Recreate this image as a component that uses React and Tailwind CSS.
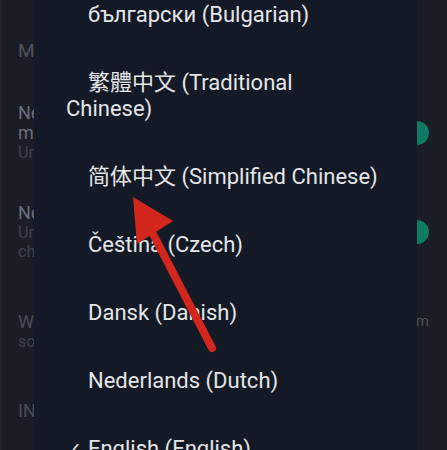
import React from "react";

const languages = [
  { label: "български (Bulgarian)" },
  { label: "繁體中文 (Traditional", wrap: "Chinese)", cjk: "tc" },
  { label: "简体中文 (Simplified Chinese)" },
  { label: "Čeština (Czech)" },
  { label: "Dansk (Danish)" },
  { label: "Nederlands (Dutch)" },
  { label: "English (English)", checked: true },
];

function Toggle() {
  return <div className="w-6 h-6 rounded-full bg-[#0e7a63] shrink-0" />;
}

function SettingsBehind() {
  return (
    <div className="flex flex-col pl-[18px] pr-[18px] text-[#50545d]">
      <div className="mt-[41px] text-[19px] leading-5">Messages</div>

      {/* New messages row */}
      <div className="mt-[42px] flex items-center justify-between">
        <div>
          <div className="text-[18px] leading-5 text-[#6c7079]">
            New message
            <br />
            messages
          </div>
          <div className="text-[16px] leading-[19px] text-[#3f434c]">Unread count only</div>
        </div>
        <Toggle />
      </div>

      {/* Chat requests row */}
      <div className="mt-[41px] flex items-center justify-between">
        <div>
          <div className="text-[18px] leading-5 text-[#6c7079]">New chat requests</div>
          <div className="text-[16px] leading-[19px] text-[#3f434c]">
            Unknown senders
            <br />
            chat invitations
          </div>
        </div>
        <Toggle />
      </div>

      {/* Wallpaper row */}
      <div className="mt-[51px] flex items-start justify-between">
        <div>
          <div className="text-[18px] leading-5 text-[#4a4e57]">Wallpaper</div>
          <div className="text-[16px] leading-[19px] text-[#3f434c]">solid color</div>
        </div>
        <div className="text-[15px] leading-5 text-[#4a4e57] mt-[-1px]">Custom</div>
      </div>

      <div className="mt-[50px] text-[18px] leading-5 text-[#4a4e57]">INTERFACE</div>
    </div>
  );
}

function LanguageMenu() {
  return (
    <div className="absolute left-[34px] top-0 w-[383px] h-full bg-[#141a25] overflow-hidden">
      <div className="mt-[-19px] flex flex-col">
        {languages.map((lang) => (
          <div
            key={lang.label}
            className={
              "py-[21px] pl-[32px] pr-[4px] text-[22px] leading-[26px] text-[#e4e5e8] whitespace-nowrap " +
              (lang.checked ? "" : "indent-[22px]")
            }
          >
            {lang.checked && <span className="font-['DejaVu_Sans'] text-[19px]">✓ </span>}
            {lang.cjk === "tc" ? (
              <span className="font-['Roboto','Noto_Sans_CJK_TC',sans-serif]">{lang.label}</span>
            ) : (
              lang.label
            )}
            {lang.wrap && (
              <>
                <br />
                {lang.wrap}
              </>
            )}
          </div>
        ))}
      </div>
    </div>
  );
}

function Arrow() {
  return (
    <svg className="absolute left-0 top-0" width="447" height="450" viewBox="0 0 447 450">
      <line x1="152" y1="232" x2="212" y2="348" stroke="#d3261c" strokeWidth="8" strokeLinecap="round" />
      <polygon points="133,197 137,244 173,221" fill="#d3261c" />
    </svg>
  );
}

export default function App() {
  return (
    <div className="relative w-[447px] h-[450px] overflow-hidden bg-[#1a1c26] font-['Roboto','Noto_Sans_CJK_SC',sans-serif]">
      <div className="absolute left-0 top-0 bottom-0 w-[2px] bg-[#23262f]" />
      <SettingsBehind />
      <LanguageMenu />
      <Arrow />
    </div>
  );
}
